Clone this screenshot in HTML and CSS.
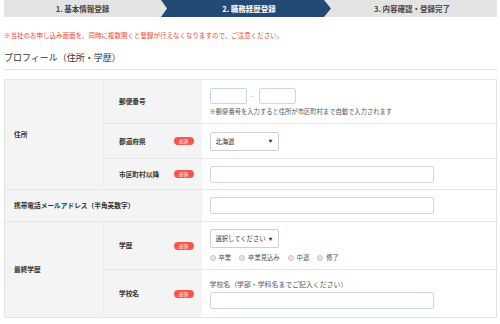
FILE: index.html
```html
<!DOCTYPE html>
<html lang="ja">
<head>
  <meta charset="UTF-8">
  <meta name="viewport" content="width=device-width, initial-scale=1.0">
  <title>プロフィール登録</title>
  <link rel="stylesheet" href="styles.css">
</head>
<body>
  <div class="page">
    <div class="steps">
      <div class="step">1. 基本情報登録</div>
      <div class="step current">2. 職務経歴登録</div>
      <div class="step">3. 内容確認・登録完了</div>
    </div>

    <p class="notice">※当社のお申し込み画面を、同時に複数開くと登録が行えなくなりますので、ご注意ください。</p>

    <h2 class="section-title">プロフィール（住所・学歴）</h2>

    <table class="form-table">
      <colgroup>
        <col class="col-group">
        <col class="col-label">
        <col>
      </colgroup>
      <tr class="row-zip">
        <th class="group" rowspan="3">住所</th>
        <th class="label"><div class="label-inner">郵便番号</div></th>
        <td class="field">
          <div class="zip">
            <input type="text" class="input input-zip">
            <span class="dash">-</span>
            <input type="text" class="input input-zip">
          </div>
          <div class="hint">※郵便番号を入力すると住所が市区町村まで自動で入力されます</div>
        </td>
      </tr>
      <tr class="row-pref">
        <th class="label"><div class="label-inner">都道府県<span class="badge">必須</span></div></th>
        <td class="field">
          <div class="select"><span>北海道</span><span class="caret">▼</span></div>
        </td>
      </tr>
      <tr class="row-city">
        <th class="label"><div class="label-inner">市区町村以降<span class="badge">必須</span></div></th>
        <td class="field"><input type="text" class="input input-wide"></td>
      </tr>
      <tr class="row-mail">
        <th class="group" colspan="2">携帯電話メールアドレス（半角英数字）</th>
        <td class="field"><input type="text" class="input input-wide"></td>
      </tr>
      <tr class="row-edu">
        <th class="group" rowspan="2">最終学歴</th>
        <th class="label"><div class="label-inner">学歴<span class="badge">必須</span></div></th>
        <td class="field">
          <div class="select"><span>選択してください</span><span class="caret">▼</span></div>
          <div class="radios">
            <label class="radio"><span class="dot"></span>卒業</label>
            <label class="radio"><span class="dot"></span>卒業見込み</label>
            <label class="radio"><span class="dot"></span>中退</label>
            <label class="radio"><span class="dot"></span>修了</label>
          </div>
        </td>
      </tr>
      <tr class="row-school">
        <th class="label"><div class="label-inner">学校名<span class="badge">必須</span></div></th>
        <td class="field">
          <div class="field-note">学校名（学部・学科名までご記入ください）</div>
          <input type="text" class="input input-wide">
        </td>
      </tr>
    </table>
  </div>
</body>
</html>
```

FILE: styles.css
```css
* {
  box-sizing: border-box;
}

body {
  margin: 0;
  background: #fff;
  color: #333;
  font-family: "Noto Sans CJK JP", "Noto Sans", sans-serif;
}

.page {
  padding: 0 3px 0 4px;
}

/* step bar */
.steps {
  display: grid;
  grid-template-columns: 157px 166px 1fr;
  height: 17px;
  background: #e4e4e4;
}

.step {
  display: flex;
  align-items: center;
  justify-content: center;
  font-size: 7.5px;
  font-weight: bold;
  color: #444;
  line-height: 1;
}

.step.current {
  background: #234a72;
  color: #fff;
  width: 170px;
  margin-right: -4px;
  padding-left: 6px;
  position: relative;
  z-index: 1;
  clip-path: polygon(0 0, calc(100% - 7px) 0, 100% 50%, calc(100% - 7px) 100%, 0 100%, 6px 50%);
}

.notice {
  margin: 13px 0 0;
  font-size: 6.5px;
  line-height: 10px;
  color: #f2462e;
}

.section-title {
  margin: 12px 0 0;
  padding-bottom: 5px;
  font-size: 9px;
  line-height: 12px;
  font-weight: normal;
  color: #333;
  border-bottom: 1px solid #e2e2e2;
}

/* form table */
.form-table {
  width: 493px;
  margin-top: 9px;
  border-collapse: collapse;
  table-layout: fixed;
  border: 1px solid #e2e2e2;
}

.col-group {
  width: 99px;
}

.col-label {
  width: 98px;
}

.form-table th,
.form-table td {
  border-top: 1px solid #e6e6e6;
  padding: 0;
  vertical-align: middle;
  text-align: left;
}

.form-table th {
  background: #f4f4f4;
  font-size: 6.7px;
  line-height: 9px;
  font-weight: bold;
  color: #333;
}

.group {
  padding-left: 9px !important;
  border-right: 1px solid #ececec;
}

.label-inner {
  display: flex;
  align-items: center;
  justify-content: space-between;
  padding: 0 8px 0 15px;
}

.badge {
  width: 20px;
  height: 8px;
  border-radius: 4px;
  background: #f7564f;
  color: #fff;
  font-size: 4.5px;
  font-weight: normal;
  line-height: 8px;
  text-align: center;
}

.field {
  padding-left: 8px !important;
  background: #fff;
}

.row-zip { height: 44px; }
.row-pref { height: 35px; }
.row-city { height: 31px; }
.row-mail { height: 32px; }
.row-edu { height: 48px; }
.row-school { height: 48px; }

.input {
  display: block;
  margin: 0;
  padding: 0 4px;
  border: 1px solid #cbd8e4;
  border-radius: 2px;
  background: #fff;
  font-family: inherit;
}

.input-zip {
  width: 37px;
  height: 16px;
}

.input-wide {
  width: 224px;
  height: 17px;
}

.zip {
  display: flex;
  align-items: center;
  gap: 5px;
}

.dash {
  font-size: 6px;
  color: #777;
}

.hint {
  margin-top: 3px;
  font-size: 6.3px;
  line-height: 9px;
  color: #555;
}

.select {
  display: flex;
  align-items: center;
  justify-content: space-between;
  width: 69px;
  height: 19px;
  padding: 0 5px 0 5px;
  border: 1px solid #cfcfcf;
  border-radius: 2px;
  background: #fff;
  font-size: 6.3px;
  color: #333;
}

.caret {
  font-size: 4px;
  color: #333;
}

.radios {
  display: flex;
  gap: 8px;
  margin-top: 5px;
  font-size: 6.3px;
  line-height: 9px;
  color: #555;
}

.radio {
  display: flex;
  align-items: center;
  gap: 3px;
}

.dot {
  width: 6px;
  height: 6px;
  border-radius: 50%;
  border: 1px solid #c4c4c4;
  background: #e6e6e6;
}

.field-note {
  margin-bottom: 3px;
  font-size: 6.9px;
  line-height: 10px;
  color: #555;
}
```
